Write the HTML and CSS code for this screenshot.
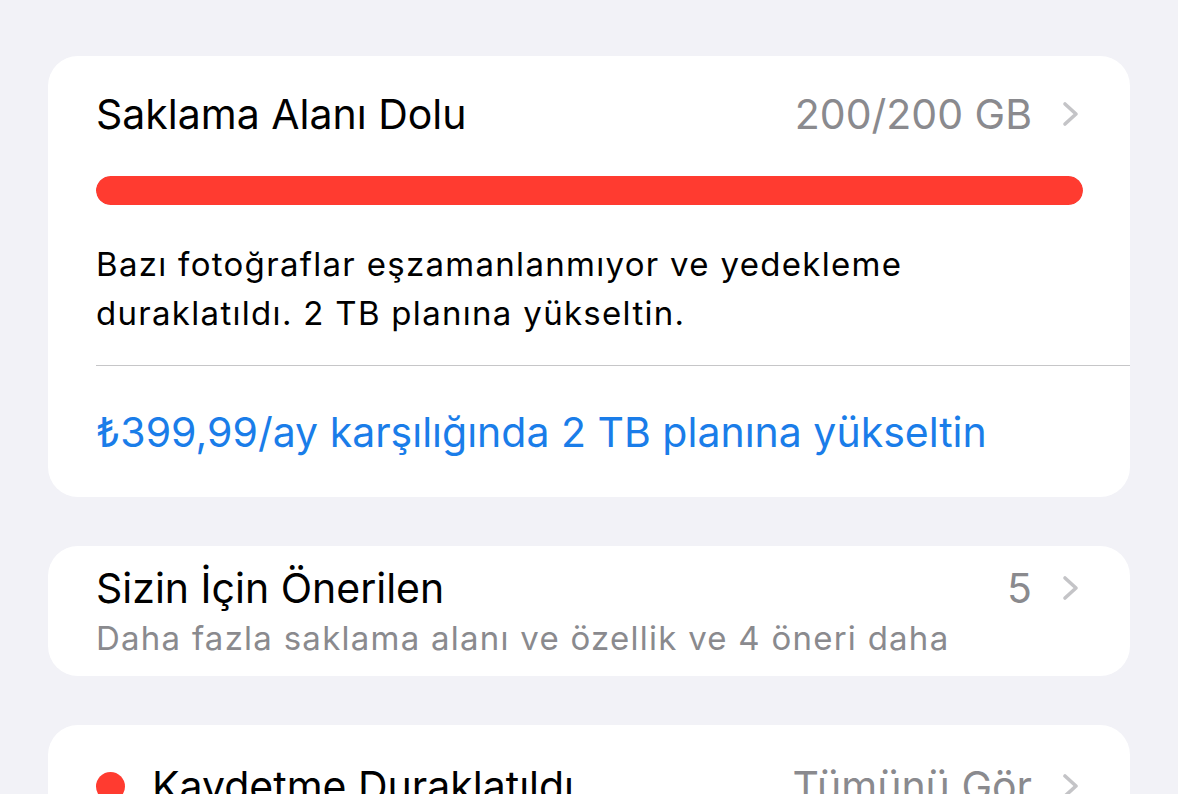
FILE: index.html
```html
<!DOCTYPE html>
<html lang="tr">
<head>
<meta charset="utf-8">
<link rel="stylesheet" href="styles.css">
</head>
<body>
<main class="page">
  <section class="card storage">
    <div class="row head">
      <span class="title">Saklama Alanı Dolu</span>
      <span class="value">200/200 GB</span>
      <svg class="chev" viewBox="0 0 18 26" width="18" height="26"><path d="M3 3 L14 13 L3 23" fill="none" stroke="#c4c4c7" stroke-width="3.6" stroke-linecap="round" stroke-linejoin="round"/></svg>
    </div>
    <div class="bar"><div class="bar-fill" style="width:100%"></div></div>
    <p class="desc">Bazı fotoğraflar eşzamanlanmıyor ve yedekleme<br>duraklatıldı. 2 TB planına yükseltin.</p>
    <div class="divider"></div>
    <a class="upgrade">₺399,99/ay karşılığında 2 TB planına yükseltin</a>
  </section>

  <section class="card recs">
    <div class="row">
      <span class="title">Sizin İçin Önerilen</span>
      <span class="value">5</span>
      <svg class="chev" viewBox="0 0 18 26" width="18" height="26"><path d="M3 3 L14 13 L3 23" fill="none" stroke="#c4c4c7" stroke-width="3.6" stroke-linecap="round" stroke-linejoin="round"/></svg>
    </div>
    <p class="sub">Daha fazla saklama alanı ve özellik ve 4 öneri daha</p>
  </section>

  <section class="card paused">
    <div class="row">
      <span class="dot"></span>
      <span class="title">Kaydetme Duraklatıldı</span>
      <span class="value">Tümünü Gör</span>
      <svg class="chev" viewBox="0 0 18 26" width="18" height="26"><path d="M3 3 L14 13 L3 23" fill="none" stroke="#c4c4c7" stroke-width="3.6" stroke-linecap="round" stroke-linejoin="round"/></svg>
    </div>
  </section>
</main>
</body>
</html>
```

FILE: styles.css
```css
html, body {
  margin: 0;
  padding: 0;
  background: #f2f2f7;
  height: 100%;
  overflow: hidden;
}
body {
  font-family: Inter, "Noto Sans", "Liberation Sans", sans-serif;
  color: #000;
  -webkit-font-smoothing: antialiased;
}
.page {
  padding: 56px 48px 0 48px;
  display: flex;
  flex-direction: column;
  gap: 49px;
}
.card {
  background: #fff;
  border-radius: 30px;
  padding-left: 48px;
}
.row {
  display: flex;
  align-items: center;
  padding-right: 50px;
}
.title {
  font-size: 41px;
  line-height: 50px;
  flex: 1;
}
.value {
  font-size: 41px;
  line-height: 50px;
  color: #8a8a8e;
}
.chev {
  margin-left: 30px;
  display: block;
}
.storage {
  padding-top: 33px;
  padding-bottom: 40px;
}
.bar {
  margin-top: 37px;
  margin-right: 47px;
  height: 29px;
  border-radius: 15px;
  background: #e5e5ea;
  overflow: hidden;
}
.bar-fill {
  height: 100%;
  background: #ff3b30;
  border-radius: 15px;
}
.desc {
  margin: 35px 48px 0 0;
  font-size: 33px;
  line-height: 49px;
  letter-spacing: 1.3px;
}
.divider {
  margin-top: 27px;
  height: 1px;
  background: #c6c6c8;
}
.upgrade {
  display: block;
  margin-top: 41px;
  font-size: 41px;
  line-height: 50px;
  color: #1a7de9;
}
.recs {
  padding-top: 17px;
  padding-bottom: 13px;
}
.sub {
  margin: 1px 0 0 0;
  font-size: 33px;
  line-height: 49px;
  color: #8a8a8e;
  letter-spacing: 1.25px;
}
.paused {
  padding-top: 36px;
  padding-bottom: 36px;
}
.dot {
  width: 29px;
  height: 29px;
  border-radius: 50%;
  background: #ff3b30;
  margin-right: 27px;
  flex: none;
}
```
